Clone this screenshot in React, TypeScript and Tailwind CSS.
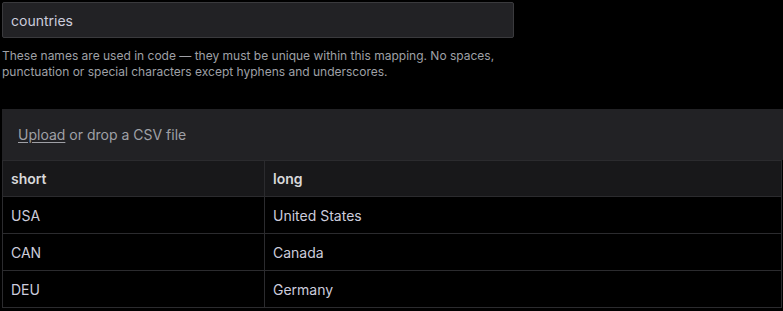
const rows = [
  { short: 'USA', long: 'United States' },
  { short: 'CAN', long: 'Canada' },
  { short: 'DEU', long: 'Germany' },
]

export default function App() {
  return (
    <div className="min-h-screen bg-black pl-[2px] pt-[2px] text-[#d8d9da]" style={{ fontFamily: 'Inter, "Noto Sans", sans-serif' }}>
      <div className="w-[512px]">
        <div className="flex h-[36px] items-center rounded-[2px] border border-[#3a3a3d] bg-[#222225] px-[8px] text-[14px] text-[#ccccdc]">
          countries
        </div>
        <p className="mt-[10px] text-[12px] leading-[16px] text-[#9fa0a6]">
          These names are used in code — they must be unique within this mapping. No spaces, punctuation or special characters except hyphens and underscores.
        </p>
      </div>

      <div className="mt-[29px]">
        <div className="flex h-[51px] items-center bg-[#222225] px-[16px] text-[14px] text-[#9fa0a6]">
          <span className="underline underline-offset-2">Upload</span>
          <span className="ml-[4px]">or drop a CSV file</span>
        </div>
        <table className="w-[780px] border-collapse text-[14px]">
          <thead>
            <tr className="h-[36px] bg-[#18181a]">
              <th className="w-[262px] border border-[#2b2b2e] px-[8px] text-left font-semibold text-[#d8d9da]">short</th>
              <th className="border border-[#2b2b2e] px-[8px] text-left font-semibold text-[#d8d9da]">long</th>
            </tr>
          </thead>
          <tbody>
            {rows.map((row) => (
              <tr key={row.short} className="h-[37px]">
                <td className="border border-[#2b2b2e] px-[8px] text-[#ccccdc]">{row.short}</td>
                <td className="border border-[#2b2b2e] px-[8px] text-[#ccccdc]">{row.long}</td>
              </tr>
            ))}
          </tbody>
        </table>
      </div>
    </div>
  )
}
